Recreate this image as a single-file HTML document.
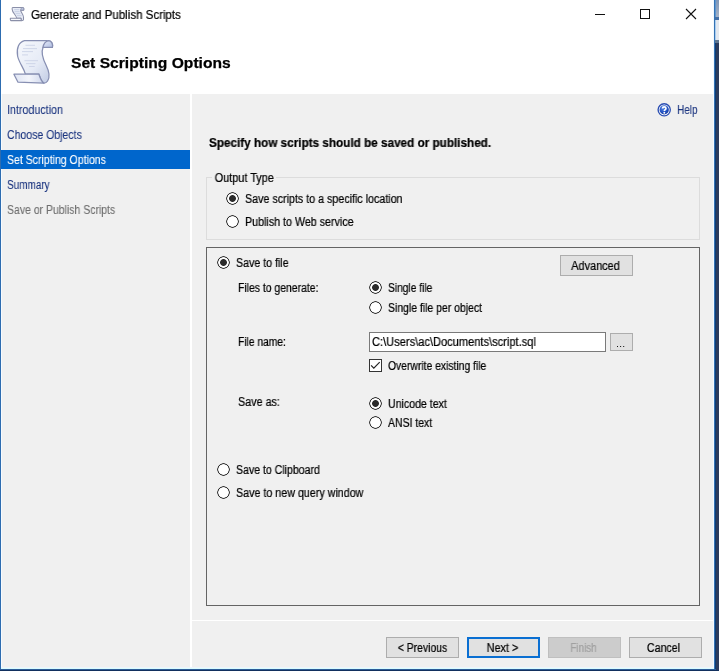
<!DOCTYPE html>
<html>
<head>
<meta charset="utf-8">
<title>Generate and Publish Scripts</title>
<style>
html,body{margin:0;padding:0;}
body{width:719px;height:671px;overflow:hidden;background:#0e2a57;position:relative;
 font-family:"Liberation Sans",sans-serif;font-size:11px;color:#000;}
.abs{position:absolute;}
.t{position:absolute;will-change:transform;-webkit-text-stroke:0.22px currentColor;white-space:pre;line-height:14px;height:14px;font-size:12px;transform:scaleX(.865);transform-origin:0 0;}
#win{position:absolute;left:0;top:0;width:714px;height:668px;background:#f0f0f0;}
#hdr{position:absolute;left:1px;top:0;width:713px;height:94px;background:#fff;}
#lb{position:absolute;left:0;top:0;width:1px;height:669px;background:#2f7bc4;}
#vsep{position:absolute;left:190px;top:94px;width:2px;height:574px;background:#fff;}
#hsep{position:absolute;left:192px;top:620px;width:522px;height:1px;background:#fff;}
.nav{color:#19337f;-webkit-text-stroke:0.08px currentColor;}
.sel{position:absolute;left:1px;top:150px;width:189px;height:19px;background:#0066cc;}
.radio{position:absolute;width:13px;height:13px;border-radius:50%;background:radial-gradient(circle closest-side,#fff 0,#fff 4.95px,#333 5.5px,#333 6.05px,rgba(51,51,51,0) 6.55px);}
.radio.on{background:radial-gradient(circle closest-side,#2a2a2a 0,#2a2a2a 3.0px,#fff 3.8px,#fff 4.95px,#333 5.5px,#333 6.05px,rgba(51,51,51,0) 6.55px);}
.btn{position:absolute;box-sizing:border-box;border:1px solid #adadad;background:#e1e1e1;}
.btn span{position:absolute;will-change:transform;-webkit-text-stroke:0.22px currentColor;left:0;top:0;width:100%;text-align:center;font-size:12px;white-space:pre;transform:scaleX(.865);transform-origin:50% 0;}
</style>
</head>
<body>
<div id="win"></div>
<div id="hdr"></div>
<div id="lb"></div>
<div id="vsep"></div>
<div id="hsep"></div>


<div class="abs" style="left:1px;top:94px;width:1px;height:574px;background:#f6fbff;"></div>
<div class="abs" style="left:713px;top:0;width:1px;height:668px;background:#f2f9ff;"></div>
<!-- window controls -->
<div class="abs" style="left:595px;top:14px;width:10px;height:1px;background:#111;"></div>
<div class="abs" style="left:640px;top:9px;width:8px;height:8px;border:1px solid #111;"></div>
<svg class="abs" style="left:684px;top:7px;" width="14" height="14" viewBox="0 0 14 14"><path d="M2 2 L12 12 M12 2 L2 12" stroke="#111" stroke-width="1.1" fill="none"/></svg>

<!-- right edge: neighbouring window strip -->
<div class="abs" style="left:714px;top:0;width:5px;height:671px;background:#2b3b5c;"></div>
<div class="abs" style="left:715px;top:0;width:1px;height:671px;background:#0d3d76;"></div>
<div class="abs" style="left:716px;top:0;width:3px;height:17px;background:linear-gradient(#7f97b8,#a3b1c6);"></div>
<div class="abs" style="left:715px;top:0;width:1px;height:17px;background:#5d96cf;"></div>
<div class="abs" style="left:715px;top:17px;width:4px;height:3px;background:#436fa7;"></div>
<div class="abs" style="left:716px;top:20px;width:3px;height:20px;background:#e3e8ef;"></div>
<div class="abs" style="left:715px;top:20px;width:1px;height:20px;background:#a9cdf0;"></div>
<div class="abs" style="left:715px;top:40px;width:4px;height:3px;background:#5d7590;"></div>
<div class="abs" style="left:714px;top:0;width:1px;height:670px;background:#3572b3;"></div>
<div class="abs" style="left:0;top:667px;width:714px;height:1px;background:#eef5fc;"></div>
<div class="abs" style="left:0;top:668px;width:714px;height:1px;background:#dafcff;"></div>
<div class="abs" style="left:0;top:669px;width:716px;height:1px;background:#2b5c98;"></div>
<div class="abs" style="left:0;top:670px;width:719px;height:1px;background:#12305e;"></div>
<div class="abs" style="left:0;top:0;width:1px;height:669px;background:#2d6cb0;"></div>

<!-- big scroll icon (viewBox uses page coordinates) -->
<svg class="abs" style="left:8px;top:34px;" width="54" height="56" viewBox="8 34 54 56">
 <defs>
  <linearGradient id="gb" x1="0" y1="0" x2="1" y2="1">
   <stop offset="0" stop-color="#f7f9fd"/><stop offset=".55" stop-color="#e6ebf6"/><stop offset="1" stop-color="#bcc7e2"/>
  </linearGradient>
  <linearGradient id="gc" x1="0" y1="0" x2="1" y2="1">
   <stop offset="0" stop-color="#e9eefa"/><stop offset="1" stop-color="#aebce0"/>
  </linearGradient>
  <linearGradient id="gr" x1="0" y1="0" x2="1" y2="0">
   <stop offset="0" stop-color="#dfe5f4"/><stop offset=".5" stop-color="#f3f5fb"/><stop offset="1" stop-color="#cfd7ec"/>
  </linearGradient>
 </defs>
 <path d="M24.5 40.6 L48.5 40.6 C51.5 41 53.2 44 52.4 47.4 L43 47.4 C40.6 53 43 59 46 65 C49 71 50.2 77 47.6 81 C46.6 82.6 45.2 83.2 43.9 83.2 C41 81.5 40 77.5 38.9 74.2 L25.4 74.2 C24 68 19 63 17.6 56 C16.2 48 19 42 24.5 40.6 Z" fill="url(#gb)" stroke="#878fb2" stroke-width="1.25"/>
 <path d="M48.5 40.6 C45.8 41.2 43.5 44 43 47.4 L52.4 47.4 C53.2 44 51.5 41 48.5 40.6 Z" fill="url(#gc)" stroke="#878fb2" stroke-width="1.25"/>
 <path d="M13.9 74.2 L38.9 74.2 C40 77.5 41 81.5 43.9 83.2 L18 82.2 Z" fill="url(#gr)" stroke="#878fb2" stroke-width="1.25" stroke-linejoin="round"/>
 <g stroke="#ccd3e6" stroke-width="0.9" fill="none">
  <path d="M25.5 45.3H35"/><path d="M23 48.6H37"/><path d="M22 51.6H33"/><path d="M22 54.9H28"/>
  <path d="M24.5 60.7H38"/><path d="M26 63.6H35.5"/><path d="M29 66.5H34.7"/>
 </g>
</svg>

<!-- small scroll icon in title bar -->
<svg class="abs" style="left:9px;top:6px;" width="16" height="16" viewBox="9 6 16 16">
 <path d="M12.8 7.5 L22.6 7.5 C23.7 7.5 24 8.7 23.7 10.2 L20.7 10.2 C20.6 12.2 23.5 14.6 23.5 17.2 L23.5 19.4 C23.5 20.3 22.8 20.6 21.4 20.6 L20.9 18.2 L16.6 18.2 C16.6 15.2 12.1 13 12.1 9 C12.1 8 12.3 7.5 12.8 7.5 Z" fill="#e9edf7" stroke="#8a8fa8" stroke-width="1.05" stroke-linejoin="round"/>
 <path d="M20.7 10.2 C20.7 8.8 21.5 7.7 22.6 7.5 C23.7 7.5 24 8.7 23.7 10.2 Z" fill="#b9c3df" stroke="#8a8fa8" stroke-width="0.8"/>
 <path d="M10.4 18.2 L20.9 18.2 L21.4 20.6 L10.9 20.6 C10.3 20.6 10.2 18.9 10.4 18.2 Z" fill="#f6f8fc" stroke="#8a8fa8" stroke-width="1.05" stroke-linejoin="round"/>
 <g stroke="#bcc5dd" stroke-width="0.8"><path d="M14.2 9.7H19.4"/><path d="M14.6 11.7H19.6"/><path d="M15.6 13.7H20.4"/><path d="M17 15.7H21.6"/></g>
</svg>

<!-- help icon -->
<svg class="abs" style="left:656px;top:102px;" width="16" height="16" viewBox="0 0 16 16">
 <defs><radialGradient id="hg" cx=".4" cy=".3" r=".8"><stop offset="0" stop-color="#5a8ae8"/><stop offset=".6" stop-color="#1f4fc0"/><stop offset="1" stop-color="#12318f"/></radialGradient></defs>
 <circle cx="8.2" cy="7.8" r="6.1" fill="#fff" stroke="#2b4eb2" stroke-width="1.35"/>
 <circle cx="8.2" cy="7.8" r="4.65" fill="url(#hg)"/>
 <path d="M6.5 6.4 C6.5 4.4 10 4.4 10 6.4 C10 7.5 8.3 7.6 8.3 9.0" fill="none" stroke="#fff" stroke-width="1.6"/>
 <circle cx="8.3" cy="10.8" r="0.95" fill="#fff"/>
</svg>

<!-- title bar -->
<div class="t" style="left:30.5px;top:8px;font-size:12px;transform:scaleX(.96);">Generate and Publish Scripts</div>

<!-- header title -->
<div class="t" style="left:71px;top:53.6px;font-size:15.5px;font-weight:bold;line-height:18px;height:18px;transform:scaleX(1.008);-webkit-text-stroke:0.25px #000;">Set Scripting Options</div>

<!-- sidebar -->
<div class="sel"></div>
<div class="t nav" style="left:6.5px;top:103px;transform:scaleX(0.893);">Introduction</div>
<div class="t nav" style="left:7px;top:128px;transform:scaleX(0.876);">Choose Objects</div>
<div class="t" style="left:6.5px;top:153px;transform:scaleX(.877);color:#fff;-webkit-text-stroke:0.1px #fff;">Set Scripting Options</div>
<div class="t nav" style="left:7.3px;top:178px;transform:scaleX(0.830);">Summary</div>
<div class="t" style="left:7.3px;top:203px;transform:scaleX(0.872);color:#6d6d6d;-webkit-text-stroke:0.08px #6d6d6d;">Save or Publish Scripts</div>

<!-- help -->
<div class="t nav" style="left:677.3px;top:103px;transform:scaleX(.835);">Help</div>

<!-- heading -->
<div class="t" style="left:208.8px;top:136px;font-size:12px;font-weight:bold;transform:scaleX(0.977);">Specify how scripts should be saved or published.</div>

<!-- Output type group -->
<div class="abs" style="left:206px;top:177px;width:492px;height:61px;border:1px solid #dcdcdc;"></div>
<div class="t" style="left:211.7px;top:171px;background:#f0f0f0;padding:0 3px;transform:scaleX(0.907);">Output Type</div>
<div class="radio on" style="left:226px;top:192px;"></div>
<div class="t" style="left:245px;top:192px;transform:scaleX(0.891);">Save scripts to a specific location</div>
<div class="radio" style="left:226px;top:215px;"></div>
<div class="t" style="left:245px;top:215px;transform:scaleX(0.891);">Publish to Web service</div>

<!-- main panel -->
<div class="abs" style="left:206px;top:247px;width:492px;height:357px;border:1px solid #646464;"></div>
<div class="radio on" style="left:217px;top:256px;"></div>
<div class="t" style="left:236px;top:256px;transform:scaleX(0.886);">Save to file</div>
<div class="btn" style="left:560px;top:255px;width:73px;height:21px;line-height:20px;"><span style="transform:scaleX(.908);left:-1px;">Advanced</span></div>

<div class="t" style="left:237.7px;top:281px;transform:scaleX(0.867);">Files to generate:</div>
<div class="radio on" style="left:369px;top:281px;"></div>
<div class="t" style="left:388px;top:281px;transform:scaleX(0.852);">Single file</div>
<div class="radio" style="left:369px;top:301px;"></div>
<div class="t" style="left:388px;top:301px;transform:scaleX(0.870);">Single file per object</div>

<div class="t" style="left:237.7px;top:335px;transform:scaleX(0.854);">File name:</div>
<div class="abs" style="left:369px;top:332px;width:235px;height:18px;border:1px solid #7a7a7a;background:#fff;"></div>
<div class="t" style="left:371.6px;top:335px;transform:scaleX(0.924);">C:\Users\ac\Documents\script.sql</div>
<div class="btn" style="left:610px;top:333px;width:23px;height:18px;"></div>
<div class="abs" style="left:616.8px;top:345.7px;width:1.4px;height:1.4px;background:#111;box-shadow:3.1px 0 0 #111,6.2px 0 0 #111;"></div>

<div class="abs" style="left:369px;top:359px;width:11px;height:11px;border:1px solid #333;background:#fff;"></div>
<svg class="abs" style="left:369px;top:359px;" width="13" height="13" viewBox="0 0 13 13"><path d="M2.1 6.3 L4.8 9.2 L10.7 3.1" fill="none" stroke="#222" stroke-width="1.15"/></svg>
<div class="t" style="left:388px;top:359px;transform:scaleX(0.862);">Overwrite existing file</div>

<div class="t" style="left:238.2px;top:395px;transform:scaleX(0.897);">Save as:</div>
<div class="radio on" style="left:369px;top:397px;"></div>
<div class="t" style="left:388px;top:397px;transform:scaleX(0.883);">Unicode text</div>
<div class="radio" style="left:369px;top:416px;"></div>
<div class="t" style="left:388px;top:416px;transform:scaleX(0.871);">ANSI text</div>

<div class="radio" style="left:217px;top:463px;"></div>
<div class="t" style="left:235.6px;top:463px;transform:scaleX(0.879);">Save to Clipboard</div>
<div class="radio" style="left:217px;top:486px;"></div>
<div class="t" style="left:235.6px;top:486px;transform:scaleX(0.892);">Save to new query window</div>

<!-- bottom buttons -->
<div class="btn" style="left:386px;top:637px;width:73px;height:21px;line-height:21px;"><span style="left:-0.4px;">&lt; Previous</span></div>
<div class="btn" style="left:467px;top:637px;width:73px;height:21px;line-height:21px;border-color:#0a6fd2;box-shadow:inset 0 0 0 1px #0a6fd2;"><span style="transform:scaleX(.904);left:-1px;">Next &gt;</span></div>
<div class="btn" style="left:548px;top:637px;width:73px;height:21px;line-height:21px;color:#a0a0a0;background:#cccccc;border-color:#bfbfbf;"><span style="transform:scaleX(.825);left:-1.1px;">Finish</span></div>
<div class="btn" style="left:629px;top:637px;width:73px;height:21px;line-height:21px;"><span style="transform:scaleX(.885);left:-1.7px;">Cancel</span></div>
</body>
</html>
